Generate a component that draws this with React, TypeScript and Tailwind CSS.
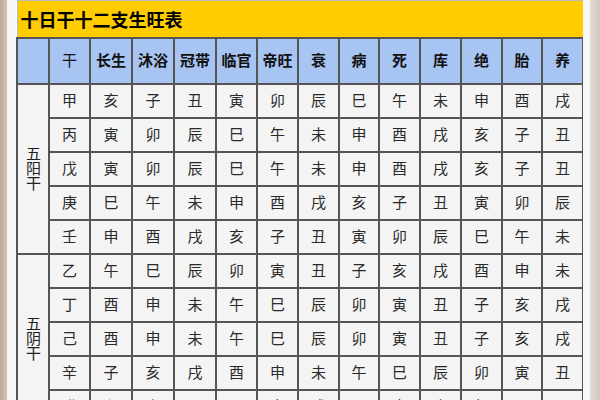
const headers = ['干', '长生', '沐浴', '冠带', '临官', '帝旺', '衰', '病', '死', '库', '绝', '胎', '养'];

const yang = [
  ['甲', '亥', '子', '丑', '寅', '卯', '辰', '巳', '午', '未', '申', '酉', '戌'],
  ['丙', '寅', '卯', '辰', '巳', '午', '未', '申', '酉', '戌', '亥', '子', '丑'],
  ['戊', '寅', '卯', '辰', '巳', '午', '未', '申', '酉', '戌', '亥', '子', '丑'],
  ['庚', '巳', '午', '未', '申', '酉', '戌', '亥', '子', '丑', '寅', '卯', '辰'],
  ['壬', '申', '酉', '戌', '亥', '子', '丑', '寅', '卯', '辰', '巳', '午', '未'],
];

const yin = [
  ['乙', '午', '巳', '辰', '卯', '寅', '丑', '子', '亥', '戌', '酉', '申', '未'],
  ['丁', '酉', '申', '未', '午', '巳', '辰', '卯', '寅', '丑', '子', '亥', '戌'],
  ['己', '酉', '申', '未', '午', '巳', '辰', '卯', '寅', '丑', '子', '亥', '戌'],
  ['辛', '子', '亥', '戌', '酉', '申', '未', '午', '巳', '辰', '卯', '寅', '丑'],
  ['癸', '卯', '寅', '丑', '子', '亥', '戌', '酉', '申', '未', '午', '巳', '辰'],
];

const widths = [32, 41, 42, 42, 42, 41, 41, 41, 40, 41, 41, 41, 40, 41];

function Group({ label, rows }: { label: string; rows: string[][] }) {
  return (
    <>
      {rows.map((row, i) => (
        <tr key={row[0]} className="h-[34px]">
          {i === 0 && (
            <td rowSpan={rows.length} className="border-2 border-[#555] bg-[#f4f4f4] text-center align-middle">
              <div className="flex justify-center">
                <span className="[writing-mode:vertical-rl] text-[15px] leading-[16px] text-[#222]">{label}</span>
              </div>
            </td>
          )}
          {row.map((c, j) => (
            <td key={j} className="border-2 border-[#555] bg-[#f4f4f4] text-center align-middle text-[15px] text-[#2a2a2a]">
              {c}
            </td>
          ))}
        </tr>
      ))}
    </>
  );
}

export default function App() {
  return (
    <div className="w-[600px] h-[400px] overflow-hidden flex bg-white" style={{ fontFamily: '"Noto Sans CJK SC", "Noto Sans", sans-serif' }}>
      <div className="w-[7px] shrink-0 bg-gradient-to-r from-[#bfa891] to-[#d6c6b6]" />
      <div className="w-[9px] shrink-0 bg-[#f7f7f7]" />
      <div className="w-[567px] shrink-0">
        <table className="border-collapse table-fixed w-[567px]">
          <colgroup>
            {widths.map((w, i) => (
              <col key={i} style={{ width: w }} />
            ))}
          </colgroup>
          <tbody>
            <tr className="h-[37px]">
              <td colSpan={14} className="bg-[#ffcc00] border border-[#bbb] border-b-2 border-b-[#555] px-[3px] text-[18px] font-bold text-black leading-none">
                十日干十二支生旺表
              </td>
            </tr>
            <tr className="h-[46px]">
              <td className="border-2 border-[#555] bg-[#a7c4f2]" />
              {headers.map((h, i) => (
                <td key={h} className={`border-2 border-[#555] bg-[#a7c4f2] text-center text-[15px] text-[#111] ${i === 0 ? 'font-normal' : 'font-bold'}`}>
                  {h}
                </td>
              ))}
            </tr>
            <Group label="五阳干" rows={yang} />
            <Group label="五阴干" rows={yin} />
          </tbody>
        </table>
      </div>
      <div className="w-[7px] shrink-0 bg-[#f7f7f7]" />
      <div className="flex-1 bg-gradient-to-r from-[#e2dcd5] to-[#cfc6bc]" />
    </div>
  );
}
